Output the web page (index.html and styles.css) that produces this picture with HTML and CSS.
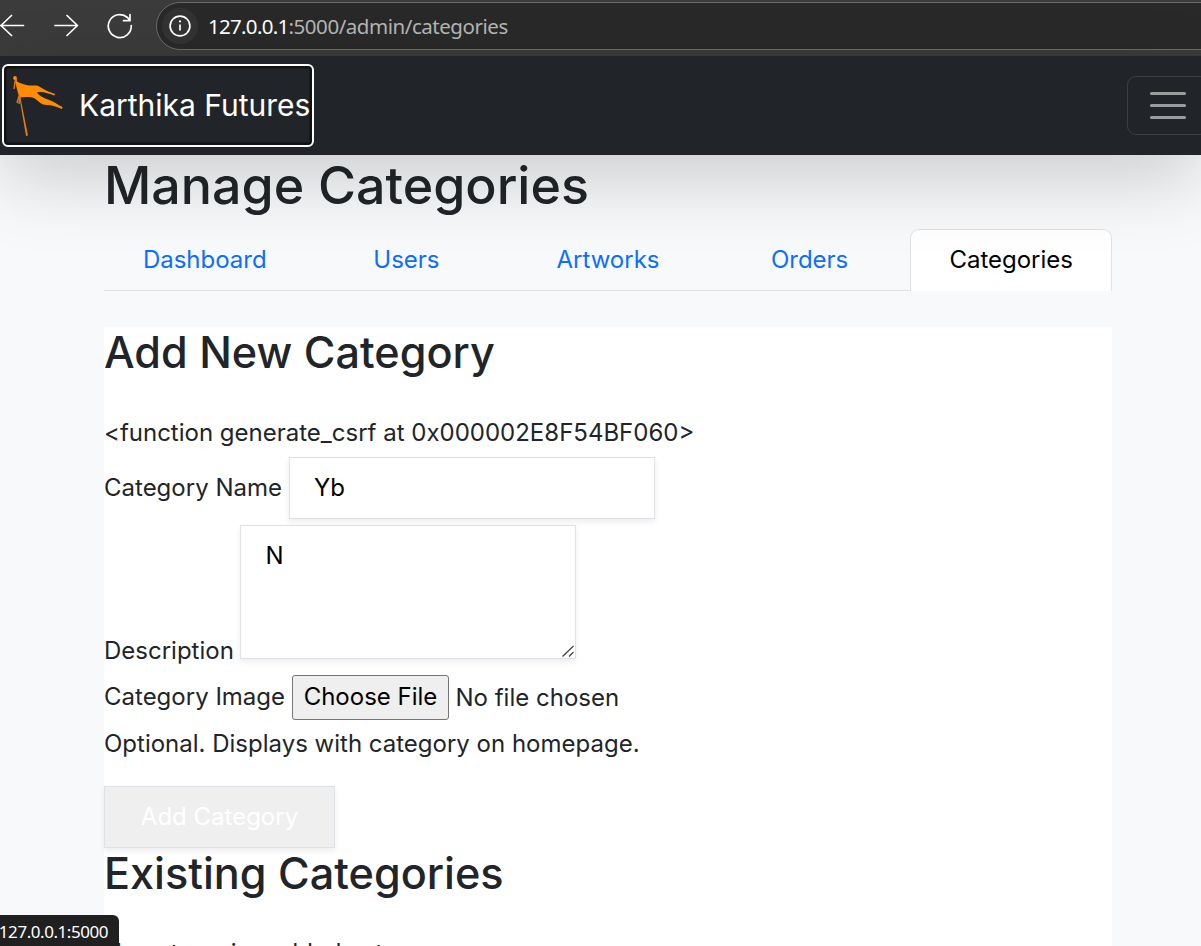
FILE: index.html
```html
<!DOCTYPE html>
<html lang="en">
<head>
<meta charset="utf-8">
<title>Manage Categories</title>
<link rel="stylesheet" href="styles.css">
</head>
<body>
<div class="chrome">
  <svg class="chrome-icons" width="150" height="56" viewBox="0 0 150 56" fill="none" stroke="#fff" stroke-width="1.7" stroke-linecap="round" stroke-linejoin="round">
    <path d="M23.500 25.500H0.500M11.500 15.500L1 25.500L11.500 35.500"/>
    <path d="M55 25.500H77.500M67 15.500L77.500 25.500L67 35.500"/>
    <path d="M131.300 25.500A11.500 11.500 0 1 1 127.500 17.500L130 20.500M130 14.500V20.700H123.500"/>
  </svg>
  <div class="address">
    <span class="site-info"><svg width="36" height="36" viewBox="0 0 36 36" fill="none" stroke="#fff" stroke-width="1.7"><circle cx="18" cy="18" r="9.900"/><path d="M18 16.500V22.500"/><circle cx="18" cy="13.400" r="1.100" fill="#fff" stroke="none"/></svg></span>
    <span class="url"><b>127.0.0.1</b>:5000/admin/categories</span>
  </div>
</div>
<nav class="navbar">
  <a class="brand">
    <svg class="flag" width="56" height="66" viewBox="0 0 56 66" fill="#ff8c00">
      <path d="M5 4L7.500 4L19 61.500L17 62L11 27Z" fill="#e67910"/>
      <circle cx="6" cy="4" r="1.900"/>
      <path d="M6.500 7C11 9 15 11 20 11.500C24 12 28 10.500 31 13C35 16 41 18 46 20L45.500 21.500C40 20 33 17 28 18.500C30 22 35 24 39 25.500C44 27 49 31 53.500 33L53 35C48 33 43 31 38 31C31 31 29 26 25 24C20 22 15 24 11 23Z"/>
      <path d="M6 7L5 15M10 22L8 29M11 23L10 30" fill="none" stroke="#c87922" stroke-width="1.500"/>
    </svg>
    <span class="brand-name">Karthika Futures</span>
  </a>
  <div class="toggler"><i></i><i></i><i></i></div>
</nav>
<main class="container">
  <h1>Manage Categories</h1>
  <ul class="tabs">
    <li>Dashboard</li><li>Users</li><li>Artworks</li><li>Orders</li><li class="active">Categories</li>
  </ul>
  <section class="panel">
    <h2>Add New Category</h2>
    <div class="token">&lt;function generate_csrf at 0x000002E8F54BF060&gt;</div>
    <div class="row name-row"><label>Category Name</label><input class="field name-field" type="text" value="Yb"></div>
    <div class="row desc-row"><label>Description</label>
      <div class="area-wrap"><textarea class="field area">N</textarea>
        <svg class="grip" width="12" height="12" viewBox="0 0 12 12" stroke="#444" stroke-width="1.300"><path d="M0.500 11.500L11.500 1M7 11.500L11.500 7"/></svg>
      </div>
    </div>
    <div class="row file-row"><label>Category Image</label><button class="choose">Choose File</button><span class="file-name">No file chosen</span></div>
    <div class="help">Optional. Displays with category on homepage.</div>
    <button class="submit">Add Category</button>
    <h2 class="existing">Existing Categories</h2>
    <p class="empty">No categories added yet.</p>
  </section>
</main>
<div class="status">127.0.0.1:5000</div>
</body>
</html>
```
FILE: styles.css
```css
* { box-sizing: border-box; }
body { margin: 0; height: 946px; overflow: hidden; background: #f8f9fa; color: #212529; font: 24px/37px Inter, sans-serif; }
.chrome { height: 56px; background: #3b3b3b; display: flex; }
.chrome-icons { flex: none; }
.address { flex: 1; height: 48px; margin: 2px -40px 0 6px; border: 1.5px solid #6b6b6b; border-radius: 24px; background: #292929; display: flex; align-items: center; padding-left: 5px; }
.site-info { width: 36px; height: 36px; border-radius: 50%; background: #333; }
.url { margin-left: 10px; font: 20.5px/30px "Noto Sans", sans-serif; letter-spacing: -0.46px; color: #b5b5b5; white-space: nowrap; }
.url b { font-weight: 400; color: #fff; letter-spacing: -0.7px; }
.navbar { position: relative; z-index: 2; height: 99px; background: #212529; box-shadow: 0 25px 75px rgba(0,0,0,.175); display: flex; justify-content: space-between; align-items: flex-start; }
.brand { display: flex; align-items: center; width: 312px; height: 83px; margin: 8px 0 0 2px; border: 2px solid #fff; border-radius: 6px; box-shadow: inset 0 0 0 2.500px #101214; padding-left: 5px; }
.flag { flex: none; margin-top: 2px; }
.brand-name { margin-left: 14px; font-size: 30px; color: #fff; white-space: nowrap; }
.toggler { width: 82px; height: 59px; margin: 20px -8px 0 0; border: 1px solid #3b3e42; border-radius: 9px; padding: 15px 0 0 22px; display: flex; flex-direction: column; gap: 9px; }
.toggler i { width: 36px; height: 3px; border-radius: 2px; background: #9b9c9e; }
.container { width: 1008px; margin: 0 0 0 104px; }
h1, h2 { margin: 0; font-weight: 500; white-space: nowrap; }
h1 { font-size: 51.9px; line-height: 62px; height: 74px; }
.tabs { display: grid; grid-template-columns: repeat(5, 1fr); list-style: none; margin: 0; padding: 0; height: 62px; border-bottom: 1px solid #dee2e6; color: #0d6efd; }
.tabs li { height: 62px; line-height: 37px; padding-top: 12px; text-align: center; }
.tabs .active { color: #000; background: #fff; border: 1px solid #dee2e6; border-bottom: 0; border-radius: 9px 9px 0 0; padding-top: 11px; }
.panel { margin-top: 36px; background: #fff; height: 640px; }
h2 { font-size: 43.2px; line-height: 51px; height: 87px; }
.token { height: 43px; white-space: nowrap; }
.row { display: flex; white-space: nowrap; }
.name-row { height: 68px; }
.name-row label { width: 185px; padding-top: 12px; }
.field { display: block; width: 366px; height: 62px; padding: 0 24.5px; border: 1px solid #dee2e6; border-radius: 0; background: #fff; color: #000; font: inherit; outline: 0; box-shadow: 0 3px 6px rgba(0,0,0,.075); }
.name-field { padding: 0 24px 2px; }
.desc-row { height: 150px; }
.desc-row label { width: 136px; padding-top: 107px; }
.area-wrap { position: relative; width: 336px; height: 134px; }
.area { width: 336px; height: 134px; padding-top: 11px; resize: none; overflow: hidden; }
.grip { position: absolute; right: 2px; bottom: 2px; }
.file-row { height: 50px; }
.file-row label { width: 188px; padding-top: 3px; }
.choose { width: 157px; height: 45px; padding: 0 0 2px; border: 1px solid #767676; border-radius: 3px; background: #efefef; color: #000; font: inherit; }
.file-name { margin-left: 6.5px; padding-top: 4px; }
.help { height: 61px; }
.submit { display: block; width: 231px; height: 62px; padding: 0 0 2px; border: 1px solid #dee2e6; background: #efefef; color: #fff; font: inherit; box-shadow: 0 3px 6px rgba(0,0,0,.075); }
.existing { height: 86px; }
.empty { margin: 0; white-space: nowrap; }
.status { position: absolute; z-index: 3; left: 0; top: 915px; width: 119px; height: 31px; background: #202020; border-radius: 0 6px 0 0; color: #fff; font: 17px/33px "Noto Sans", sans-serif; letter-spacing: -0.45px; display: flex; justify-content: flex-end; padding-right: 11px; overflow: hidden; white-space: nowrap; }
```
